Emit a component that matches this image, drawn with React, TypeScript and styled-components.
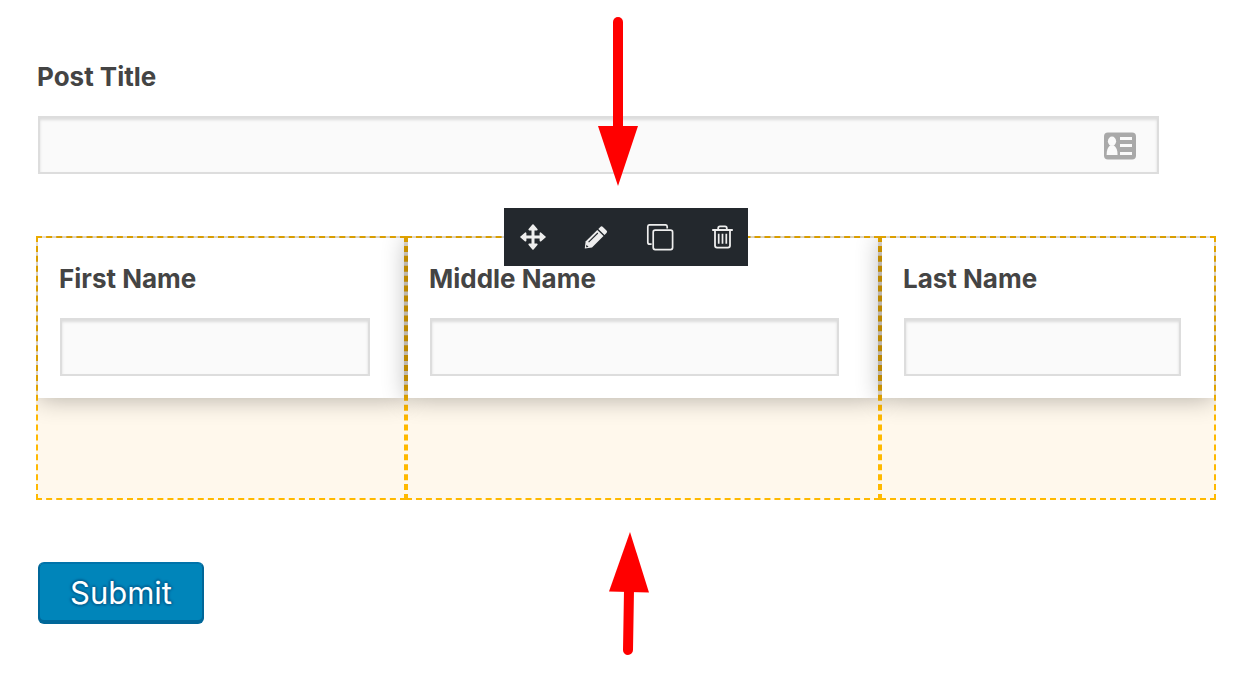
import React, { useId } from "react";
import styled, { createGlobalStyle } from "styled-components";

const GlobalStyle = createGlobalStyle`
  *, *::before, *::after { box-sizing: border-box; }
  body {
    margin: 0;
    background: #fff;
    color: #444;
    font-family: Inter, "Liberation Sans", sans-serif;
  }
`;

const Page = styled.main`
  position: relative;
  padding: 56px 44px 52px 36px;
`;

const Field = styled.div`
  display: flex;
  flex-direction: column;
`;

const Label = styled.label`
  margin-bottom: 18px;
  padding-left: 1px;
  font-size: 26px;
  font-weight: 700;
  line-height: 42px;
  white-space: nowrap;
`;

const InputWrap = styled.div`
  position: relative;
  width: 95%;
  margin: 0 2px 2px;
`;

const TextInput = styled.input`
  display: block;
  width: 100%;
  height: 58px;
  padding: 0 16px;
  border: 2px solid #ddd;
  border-radius: 0;
  outline: none;
  background: #fafafa;
  box-shadow: inset 0 2px 3px rgba(0, 0, 0, 0.12);
  color: #444;
  font: inherit;
  font-size: 26px;
`;

const ContactBadge = styled.svg`
  position: absolute;
  top: 16px;
  right: 23px;
`;

const RowWrap = styled.section`
  position: relative;
  margin-top: 60px;
`;

const Columns = styled.div`
  display: grid;
  grid-template-columns: 370fr 474fr 336fr;
  min-height: 264px;
  overflow: hidden;
`;

const Column = styled.div`
  min-width: 0;
  border: 2px dashed #ffb900;
  background: #fff8ec;
`;

const Card = styled.div`
  position: relative;
  padding: 20px;
  background: #fff;
  box-shadow: 0 0 24px rgba(0, 0, 0, 0.32);
`;

const Toolbar = styled.div`
  position: absolute;
  top: -28px;
  left: 50%;
  z-index: 1;
  display: flex;
  align-items: center;
  gap: 38px;
  height: 58px;
  padding: 0 15px 0 16px;
  background: #23282d;
  transform: translateX(-50%);
`;

const ToolButton = styled.button`
  display: flex;
  align-items: center;
  height: 58px;
  padding: 0;
  border: 0;
  background: none;
  color: #eee;
  cursor: pointer;
`;

const SubmitButton = styled.button`
  display: block;
  height: 60px;
  margin: 62px 2px 0;
  padding: 2px 30px 0;
  border: 2px solid #006799;
  border-top-color: #0073aa;
  border-radius: 6px;
  background: #0085ba;
  box-shadow: 0 2px 0 #006799;
  color: #fff;
  font-family: inherit;
  font-size: 31px;
  line-height: 54px;
  text-shadow: 0 -2px 2px #006799, 2px 0 2px #006799, 0 2px 2px #006799, -2px 0 2px #006799;
  cursor: pointer;
`;

const Pointer = styled.svg<{ $top: number; $shift: number }>`
  position: absolute;
  top: ${(p) => p.$top}px;
  left: calc(50% - ${(p) => p.$shift}px);
  z-index: 2;
  pointer-events: none;
`;

function ContactIcon() {
  return (
    <ContactBadge width="32" height="28" viewBox="0 0 32 28" aria-hidden="true">
      <rect y="0.4" width="32" height="27.2" rx="4" fill="#a9a9a9" />
      <g fill="#fafafa">
        <ellipse cx="8" cy="9.2" rx="4.1" ry="4.6" />
        <path d="M2.600 23c0-4.600 1.200-8 3.600-9.800h3.600c2.600 1.800 3.800 5.200 3.800 9.800z" />
        <rect x="16" y="5" width="12" height="3" />
        <rect x="16" y="12" width="12" height="3" />
        <rect x="16" y="20" width="12" height="3" />
      </g>
    </ContactBadge>
  );
}

function MoveIcon() {
  return (
    <svg width="26" height="26" viewBox="0 0 26 26" fill="currentColor" aria-hidden="true">
      <path d="M11.500 5h3v16h-3z M5 11.500h16v3H5z" />
      <g stroke="currentColor" strokeWidth="1.600" strokeLinejoin="round">
        <path d="M13 1l3.800 4.600H9.200z" />
        <path d="M13 25l3.800-4.600H9.200z" />
        <path d="M1 13l4.600-3.800v7.600z" />
        <path d="M25 13l-4.600-3.800v7.600z" />
      </g>
    </svg>
  );
}

function PencilIcon() {
  return (
    <svg width="24" height="24" viewBox="0 0 24 24" fill="currentColor" aria-hidden="true">
      <path d="M16.300 1.900Q17.600 .6 18.900 1.900l3.600 3.600q1.300 1.300 0 2.600l-2 2-6.200-6.200z" />
      <path d="M13.300 4.900l6.200 6.200L8 22.600.8 23.400 1.600 16.600z" />
      <path d="M4.600 17.200L13.800 8" stroke="#23282d" strokeWidth="1.100" fill="none" />
      <path d="M2.400 19.800l2.200 2.200-2.500.3z" fill="#23282d" />
    </svg>
  );
}

function CopyIcon() {
  return (
    <svg
      width="28"
      height="27"
      viewBox="-1 0 28 27"
      fill="none"
      stroke="currentColor"
      strokeWidth="1.700"
      aria-hidden="true"
    >
      <path d="M20.200 4.400V2.800a2 2 0 0 0-2-2H2.800a2 2 0 0 0-2 2v15.400a2 2 0 0 0 2 2h1.800" />
      <rect x="6.200" y="6.200" width="19.400" height="19.400" rx="2" />
    </svg>
  );
}

function TrashIcon() {
  return (
    <svg
      width="21"
      height="24"
      viewBox="0 0 21 24"
      fill="none"
      stroke="currentColor"
      strokeWidth="1.800"
      aria-hidden="true"
    >
      <path d="M.2 5h20.600" strokeWidth="2" />
      <path d="M6.200 5V3.200q0-1.800 1.800-1.800h5q1.800 0 1.800 1.800V5" />
      <path d="M3 5v15.600q0 2 2 2h11q2 0 2-2V5" />
      <path d="M6.700 8.800v10M10.500 8.800v10M14.300 8.800v10" strokeWidth="1.700" />
    </svg>
  );
}

const tools = [
  { name: "Move", Icon: MoveIcon },
  { name: "Edit", Icon: PencilIcon },
  { name: "Duplicate", Icon: CopyIcon },
  { name: "Delete", Icon: TrashIcon },
];

function TextField({ label, icon }: { label: string; icon?: React.ReactNode }) {
  const id = useId();
  return (
    <Field>
      <Label htmlFor={id}>{label}</Label>
      <InputWrap>
        <TextInput id={id} type="text" />
        {icon}
      </InputWrap>
    </Field>
  );
}

export default function App() {
  return (
    <>
      <GlobalStyle />
      <Page>
        <TextField label="Post Title" icon={<ContactIcon />} />
        <RowWrap>
          <Columns>
            {["First Name", "Middle Name", "Last Name"].map((name) => (
              <Column key={name}>
                <Card>
                  <TextField label={name} />
                </Card>
              </Column>
            ))}
          </Columns>
          <Toolbar>
            {tools.map(({ name, Icon }) => (
              <ToolButton key={name} type="button" aria-label={name}>
                <Icon />
              </ToolButton>
            ))}
          </Toolbar>
        </RowWrap>
        <SubmitButton type="button">Submit</SubmitButton>
        <Pointer $top={16} $shift={32} width="40" height="170" viewBox="0 0 40 170" aria-hidden="true">
          <path d="M20 6v106" stroke="#f00" strokeWidth="10" strokeLinecap="round" />
          <path d="M0 110h40L20 170z" fill="#f00" />
        </Pointer>
        <Pointer $top={532} $shift={21} width="40" height="124" viewBox="0 0 40 124" aria-hidden="true">
          <path d="M20 58l-1 60" stroke="#f00" strokeWidth="10" strokeLinecap="round" />
          <path d="M21 0l19 60.500L0 59.500z" fill="#f00" />
        </Pointer>
      </Page>
    </>
  );
}
